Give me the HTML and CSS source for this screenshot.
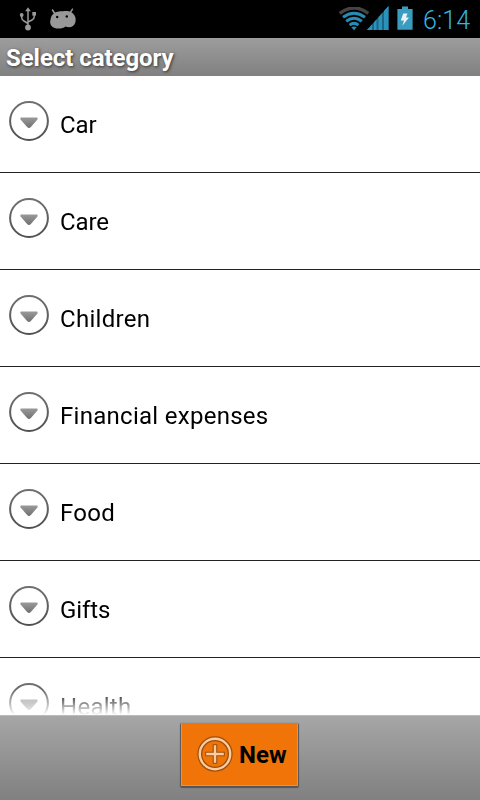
FILE: index.html
```html
<!DOCTYPE html>
<html lang="en">
<head>
<meta charset="utf-8">
<title>Select category</title>
<link rel="stylesheet" href="styles.css">
</head>
<body>
<svg width="0" height="0" class="defs">
  <defs>
    <linearGradient id="ring" x1="0" y1="0" x2="0" y2="1"><stop offset="0" stop-color="#707070"/><stop offset="1" stop-color="#505050"/></linearGradient>
    <linearGradient id="tri" x1="0" y1="0" x2="0" y2="1"><stop offset="0" stop-color="#989898"/><stop offset="1" stop-color="#727272"/></linearGradient>
    <symbol id="expand" viewBox="0 0 42 42">
      <circle cx="21" cy="21" r="18.9" fill="#fff" stroke="url(#ring)" stroke-width="2"/>
      <path d="M13 18H29V19L22.2 26.8Q21 28 19.8 26.8L13 19Z" fill="url(#tri)" stroke="url(#tri)" stroke-width="1.2" stroke-linejoin="round"/>
    </symbol>
  </defs>
</svg>
<div class="screen">
  <header class="status">
    <svg class="usb" width="18" height="24" viewBox="0 0 18 24" fill="none" stroke="#999" stroke-width="1.5">
      <path d="M9 3V20M2.7 8V10.5Q2.7 13 5 14L9 16.5M15.2 7V10Q15.2 12 13 13L9 15"/>
      <path d="M9 0.3L11.8 4.2H6.2Z" fill="#999" stroke="none"/>
      <circle cx="9" cy="20.5" r="2.9" fill="#999" stroke="none"/>
      <circle cx="2.7" cy="8" r="1.9" fill="#999" stroke="none"/>
      <path d="M13.3 5H17V8.6H13.3Z" fill="#999" stroke="none"/>
    </svg>
    <svg class="droid" width="28" height="22" viewBox="0 0 28 22">
      <path d="M3.5 2L6 6M23.5 1.2L21 5" stroke="#999" stroke-width="1.5" stroke-linecap="round"/>
      <path d="M4 6.2C7 3 12 3.2 14 3.2C17 3 21 2.6 24 5.5C27 8.5 27 12 26.3 14.5C25.2 19 20.5 20.2 16.5 18.5C13.5 21 8.5 21 5 19.7C1 18 .8 14 1.5 12C2 9.5 2 8 4 6.2Z" fill="#999"/>
      <circle cx="8.2" cy="9" r="1.2" fill="#000"/><circle cx="17.8" cy="8.4" r="1.2" fill="#000"/>
    </svg>
    <span class="spacer"></span>
    <svg class="wifi" width="32" height="24" viewBox="0 0 32 24" fill="none">
      <path d="M1.7 6.3Q16 -4.3 30.3 6.3" stroke="#444" stroke-width="3.4"/>
      <g stroke="#268cb5" stroke-width="3">
        <path d="M5 10.3Q16 2.3 27 10.3"/>
        <path d="M8.2 14.2Q16 8.4 23.8 14.2"/>
        <path d="M11.6 18.1Q16 14.7 20.4 18.1"/>
      </g>
      <path d="M13.3 20.2Q16 18.7 18.7 20.2L16 23.2Z" fill="#268cb5"/>
    </svg>
    <svg class="signal" width="22" height="24" viewBox="0 0 22 24">
      <path d="M0 24L21.5 0V24Z" fill="#1b6683"/>
      <path d="M0 24L5 18.4V24ZM7 24V16.2L9.5 13.4V24ZM11.5 24V11.2L15 7.3V24ZM17 24V5L21.5 0V24Z" fill="#2b93bb"/>
    </svg>
    <svg class="battery" width="16" height="24" viewBox="0 0 16 24">
      <path d="M5 .5H11V3H15.6V23.7H.4V3H5Z" fill="#3a9dc0"/>
      <path d="M6.2 7.5H10.5L9 11.5H12L5.3 19.8L7 14.5H3.8Z" fill="#e8f3f7"/>
    </svg>
    <span class="clock">6:14</span>
  </header>
  <div class="title"><h1>Select category</h1></div>
  <ul class="list">
    <li class="tight"><svg class="expand"><use href="#expand"/></svg><span>Car</span></li>
    <li class="tight"><svg class="expand"><use href="#expand"/></svg><span>Care</span></li>
    <li><svg class="expand"><use href="#expand"/></svg><span>Children</span></li>
    <li><svg class="expand"><use href="#expand"/></svg><span>Financial expenses</span></li>
    <li><svg class="expand"><use href="#expand"/></svg><span>Food</span></li>
    <li class="tight"><svg class="expand"><use href="#expand"/></svg><span>Gifts</span></li>
    <li><svg class="expand"><use href="#expand"/></svg><span>Health</span></li>
  </ul>
  <footer class="bar">
    <button class="new">
      <svg width="36" height="36" viewBox="0 0 36 36" fill="none">
        <circle cx="18" cy="18" r="15.2" stroke="#9a4f10" stroke-width="5"/>
        <circle cx="18" cy="18" r="15.2" stroke="#ffcb9b" stroke-width="2.4"/>
        <path d="M18 8.2V27.8M8.2 18H27.8" stroke="#9a4f10" stroke-width="4.6"/>
        <path d="M18 9.2V26.8M9.2 18H26.8" stroke="#ffcb9b" stroke-width="2.4"/>
      </svg>
      <span>New</span>
    </button>
  </footer>
</div>
</body>
</html>
```
FILE: styles.css
```css
* { box-sizing: border-box; }
body { margin: 0; font-family: Roboto, "Liberation Sans", sans-serif; background: #fff; }
.defs { position: absolute; }
.screen { width: 480px; height: 800px; display: flex; flex-direction: column; overflow: hidden; }
.status { flex: none; height: 38px; background: #000; display: flex; align-items: flex-start; padding: 7px 9px 0 19px; }
.status svg { flex: none; }
.droid { margin: 1px 0 0 12px; }
.spacer { flex: 1; }
.wifi { margin-right: -3px; }
.signal { margin: -1px 8px 0 0; }
.battery { margin-right: 10px; margin-top: -1px; }
.clock { width: 48px; color: #33b5e5; font-size: 25px; font-weight: 300; line-height: 27px; letter-spacing: .1px; white-space: nowrap; }
.title { flex: none; height: 38px; padding: 0 6px; background: linear-gradient(#9d9d9d, #808080); }
h1 { margin: 0; color: #fff; font-size: 24px; line-height: 40px; font-weight: 700; letter-spacing: -.06px; text-shadow: 1px 1px 3px #333; }
.list { flex: 1; min-height: 0; overflow: hidden; margin: 0; padding: 0; list-style: none; background: #fff;
  -webkit-mask-image: linear-gradient(#000 calc(100% - 26px), transparent); mask-image: linear-gradient(#000 calc(100% - 26px), transparent); }
.list li { height: 97px; border-bottom: 1px solid #222; display: flex; align-items: center; padding-left: 8px; font-size: 24px; line-height: 28px; letter-spacing: .28px; color: #000; }
.list .tight { letter-spacing: -.1px; }
.expand { width: 42px; height: 42px; margin: -6px 10px 0 0; }
.list span { padding-top: 2px; }
.bar { flex: none; height: 85px; border-top: 1px solid #bbb; background: linear-gradient(#a6a6a6, #808080); display: flex; justify-content: center; padding: 7px 1px 0 0; }
.new { width: 117px; height: 63px; padding: 0 0 0 15px; border: 1px solid #ff8c24; border-top-color: #ef7508; border-radius: 1px; background: #f07407; box-shadow: 0 1px 1px 1px #555; display: flex; align-items: center; gap: 6px; color: #000; font: 700 24px/28px Roboto, sans-serif; }
.new svg { margin-top: -1px; }
```
